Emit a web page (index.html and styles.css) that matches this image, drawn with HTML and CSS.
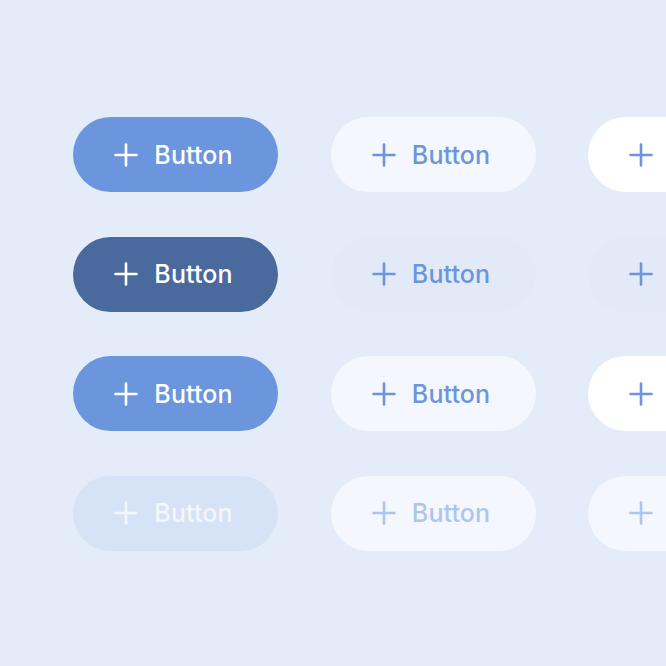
FILE: index.html
```html
<!DOCTYPE html>
<html>
<head>
<meta charset="utf-8">
<link rel="stylesheet" href="styles.css">
</head>
<body>
<svg width="0" height="0" class="defs">
  <defs>
    <symbol id="plus" viewBox="0 0 24 24"><path d="M12 1.5v21M1.5 12h21" stroke="currentColor" stroke-width="2.6" stroke-linecap="round" fill="none"/></symbol>
  </defs>
</svg>
<div class="grid">
  <button class="btn primary"><svg class="ic"><use href="#plus"/></svg><span>Button</span></button>
  <button class="btn soft"><svg class="ic"><use href="#plus"/></svg><span>Button</span></button>
  <button class="btn white"><svg class="ic"><use href="#plus"/></svg><span>Button</span></button>

  <button class="btn primary pressed"><svg class="ic"><use href="#plus"/></svg><span>Button</span></button>
  <button class="btn ghost"><svg class="ic"><use href="#plus"/></svg><span>Button</span></button>
  <button class="btn ghost"><svg class="ic"><use href="#plus"/></svg><span>Button</span></button>

  <button class="btn primary"><svg class="ic"><use href="#plus"/></svg><span>Button</span></button>
  <button class="btn soft"><svg class="ic"><use href="#plus"/></svg><span>Button</span></button>
  <button class="btn white"><svg class="ic"><use href="#plus"/></svg><span>Button</span></button>

  <button class="btn primary disabled"><svg class="ic"><use href="#plus"/></svg><span>Button</span></button>
  <button class="btn soft disabled"><svg class="ic"><use href="#plus"/></svg><span>Button</span></button>
  <button class="btn soft disabled"><svg class="ic"><use href="#plus"/></svg><span>Button</span></button>
</div>
</body>
</html>
```
FILE: styles.css
```css
html, body {
  margin: 0;
  padding: 0;
  width: 666px;
  height: 666px;
  overflow: hidden;
  background: #E4ECF9;
  font-family: Inter, "Noto Sans", sans-serif;
}
.defs {
  position: absolute;
  width: 0;
  height: 0;
}
.grid {
  display: grid;
  grid-template-columns: repeat(3, 205px);
  grid-auto-rows: 75px;
  column-gap: 52.5px;
  row-gap: 44.5px;
  padding: 117px 0 0 73px;
  width: max-content;
}
.btn {
  display: flex;
  align-items: center;
  justify-content: center;
  gap: 16px;
  border: none;
  border-radius: 38px;
  padding: 0 0 0 0;
  font-family: inherit;
  font-size: 25px;
  font-weight: 500;
  letter-spacing: 0.1px;
  cursor: pointer;
}
.btn span {
  margin-right: 4px;
}
.ic {
  width: 24px;
  height: 24px;
  flex: none;
}
.primary {
  background: #6B95DD;
  color: #FFFFFF;
}
.primary.pressed {
  background: #4A699D;
}
.soft {
  background: #F4F7FD;
  color: #6B95DD;
}
.white {
  background: #FFFFFF;
  color: #6B95DD;
}
.ghost {
  background: #E2EAF8;
  color: #6B95DD;
}
.primary.disabled {
  background: #D6E2F5;
  color: #F2F6FD;
}
.soft.disabled {
  background: #F4F7FD;
  color: #AEC5EF;
}
```
